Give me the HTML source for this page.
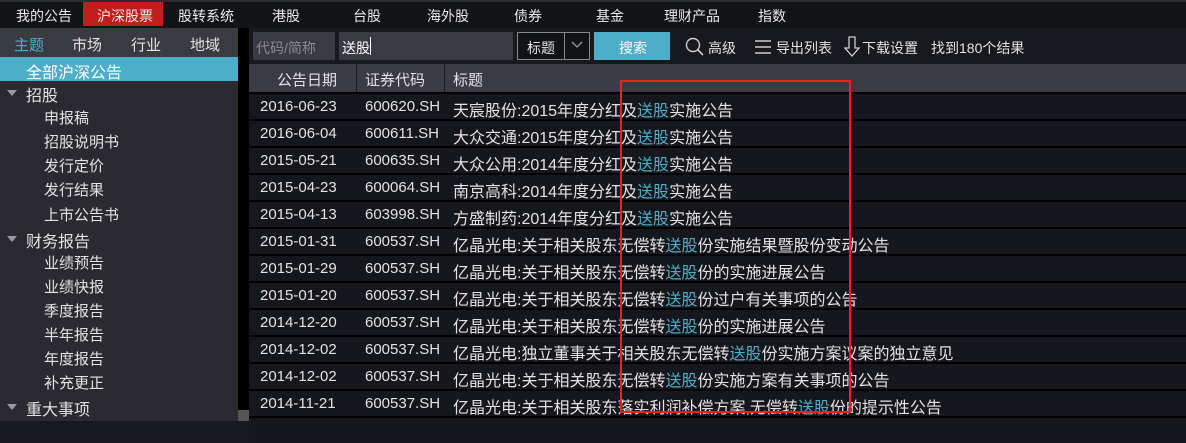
<!DOCTYPE html>
<html><head><meta charset="utf-8"><style>
*{margin:0;padding:0;box-sizing:border-box}
body{width:1186px;height:421px;overflow:hidden;background:#18191e;font-family:"Liberation Sans","Noto Sans CJK SC",sans-serif;font-size:14px;color:#e2e2e2;position:relative}
.a{position:absolute;white-space:nowrap}
.nav{left:0;top:0;width:1186px;height:28px;background:#111317;border-top:2px solid #2a2b30}
.nav span{position:absolute;top:4px;font-size:14px;color:#e8e8e8}
.side{left:0;top:28px;width:238px;height:393px;background:#2b2a31}
.tabs{left:0;top:28px;width:238px;height:29px;background:#3a3a41}
.gap{left:238px;top:28px;width:11px;height:393px;background:#000}
.inp{background:#3a3b42;height:28px;top:32px}
.hd{left:249px;top:64px;width:937px;height:28px;background:#3a3b44}
.row{left:249px;width:937px;height:25px;background:#15171c;font-size:16px}
.row span{position:absolute;top:3px}
.row span.d{font-size:15px;top:4px}
.b{color:#4eadc8}
.si{font-size:15px}
</style></head><body>
<div class="a nav">
<span style="left:16px">我的公告</span>
<div class="a" style="left:83px;top:0;width:80px;height:24px;background:#c01d1d"></div>
<span style="left:97px">沪深股票</span>
<span style="left:178px">股转系统</span>
<span style="left:272px">港股</span>
<span style="left:353px">台股</span>
<span style="left:427px">海外股</span>
<span style="left:514px">债券</span>
<span style="left:596px">基金</span>
<span style="left:664px">理财产品</span>
<span style="left:758px">指数</span>
</div>
<div class="a side"></div>
<div class="a tabs"></div>
<div class="a si" style="left:14px;top:34px;color:#4eadc8">主题</div>
<div class="a si" style="left:72px;top:34px">市场</div>
<div class="a si" style="left:131px;top:34px">行业</div>
<div class="a si" style="left:190px;top:34px">地域</div>
<div class="a" style="left:0;top:57px;width:238px;height:24px;background:#4eadc8"></div>
<div class="a" style="left:26px;top:59px;font-size:16px;color:#fff">全部沪深公告</div>
<div class="a" style="left:7px;top:90px;width:0;height:0;border-left:5px solid transparent;border-right:5px solid transparent;border-top:6px solid #999"></div>
<div class="a" style="left:26px;top:82px;font-size:16px">招股</div>
<div class="a si" style="left:44px;top:107px">申报稿</div>
<div class="a si" style="left:44px;top:131px">招股说明书</div>
<div class="a si" style="left:44px;top:155px">发行定价</div>
<div class="a si" style="left:44px;top:179px">发行结果</div>
<div class="a si" style="left:44px;top:204px">上市公告书</div>
<div class="a" style="left:7px;top:236px;width:0;height:0;border-left:5px solid transparent;border-right:5px solid transparent;border-top:6px solid #999"></div>
<div class="a" style="left:26px;top:228px;font-size:16px">财务报告</div>
<div class="a si" style="left:44px;top:252px">业绩预告</div>
<div class="a si" style="left:44px;top:276px">业绩快报</div>
<div class="a si" style="left:44px;top:300px">季度报告</div>
<div class="a si" style="left:44px;top:324px">半年报告</div>
<div class="a si" style="left:44px;top:348px">年度报告</div>
<div class="a si" style="left:44px;top:372px">补充更正</div>
<div class="a" style="left:7px;top:404px;width:0;height:0;border-left:5px solid transparent;border-right:5px solid transparent;border-top:6px solid #999"></div>
<div class="a" style="left:26px;top:396px;font-size:16px">重大事项</div>
<div class="a gap"></div>
<div class="a" style="left:238px;top:410px;width:11px;height:11px;background:#555"></div>

<div class="a inp" style="left:253px;width:82px"></div>
<div class="a" style="left:256px;top:38px;color:#8a8a90">代码/简称</div>
<div class="a inp" style="left:339px;width:174px"></div>
<div class="a" style="left:342px;top:38px;color:#fff">送股</div>
<div class="a" style="left:370px;top:37px;width:1px;height:18px;background:#fff"></div>
<div class="a" style="left:517px;top:32px;width:73px;height:28px;border:1px solid #888;background:#111317"></div>
<div class="a" style="left:564px;top:33px;width:1px;height:26px;background:#888"></div>
<div class="a" style="left:527px;top:38px">标题</div>
<svg class="a" style="left:570px;top:40px" width="14" height="10"><path d="M2 2 L7 7 L12 2" stroke="#999" fill="none" stroke-width="1.3"/></svg>
<div class="a" style="left:594px;top:32px;width:76px;height:28px;background:#4eadc8"></div>
<div class="a" style="left:619px;top:38px;color:#fff">搜索</div>
<svg class="a" style="left:685px;top:37px" width="20" height="20"><circle cx="8" cy="8" r="6.5" stroke="#ccc" fill="none" stroke-width="1.4"/><path d="M12.5 12.5 L18 18" stroke="#ccc" stroke-width="1.6"/></svg>
<div class="a" style="left:708px;top:38px">高级</div>
<svg class="a" style="left:754px;top:39px" width="18" height="16"><path d="M1 2H17M1 8H17M1 14H17" stroke="#ccc" stroke-width="1.4"/></svg>
<div class="a" style="left:776px;top:38px">导出列表</div>
<svg class="a" style="left:844px;top:36px" width="16" height="22"><path d="M5 1H11V12H15L8 20L1 12H5Z" stroke="#ccc" fill="none" stroke-width="1.3"/></svg>
<div class="a" style="left:862px;top:38px">下载设置</div>
<div class="a" style="left:931px;top:38px">找到180个结果</div>

<div class="a hd"></div>
<div class="a" style="left:356px;top:64px;width:1px;height:28px;background:#1a1b20"></div>
<div class="a" style="left:444px;top:64px;width:1px;height:28px;background:#1a1b20"></div>
<div class="a" style="left:277px;top:69px;font-size:15px">公告日期</div>
<div class="a" style="left:365px;top:69px;font-size:15px">证券代码</div>
<div class="a" style="left:453px;top:69px;font-size:15px">标题</div>

<div class="a" style="left:249px;top:92px;width:937px;height:329px;background:#000"></div>
<div class="a row" style="top:94px"><span class="d" style="left:11px">2016-06-23</span><span class="d" style="left:116px">600620.SH</span><span style="left:204px">天宸股份:2015年度分红及<span class="b" style="position:static">送股</span>实施公告</span></div>
<div class="a row" style="top:121px"><span class="d" style="left:11px">2016-06-04</span><span class="d" style="left:116px">600611.SH</span><span style="left:204px">大众交通:2015年度分红及<span class="b" style="position:static">送股</span>实施公告</span></div>
<div class="a row" style="top:148px"><span class="d" style="left:11px">2015-05-21</span><span class="d" style="left:116px">600635.SH</span><span style="left:204px">大众公用:2014年度分红及<span class="b" style="position:static">送股</span>实施公告</span></div>
<div class="a row" style="top:175px"><span class="d" style="left:11px">2015-04-23</span><span class="d" style="left:116px">600064.SH</span><span style="left:204px">南京高科:2014年度分红及<span class="b" style="position:static">送股</span>实施公告</span></div>
<div class="a row" style="top:202px"><span class="d" style="left:11px">2015-04-13</span><span class="d" style="left:116px">603998.SH</span><span style="left:204px">方盛制药:2014年度分红及<span class="b" style="position:static">送股</span>实施公告</span></div>
<div class="a row" style="top:229px"><span class="d" style="left:11px">2015-01-31</span><span class="d" style="left:116px">600537.SH</span><span style="left:204px">亿晶光电:关于相关股东无偿转<span class="b" style="position:static">送股</span>份实施结果暨股份变动公告</span></div>
<div class="a row" style="top:256px"><span class="d" style="left:11px">2015-01-29</span><span class="d" style="left:116px">600537.SH</span><span style="left:204px">亿晶光电:关于相关股东无偿转<span class="b" style="position:static">送股</span>份的实施进展公告</span></div>
<div class="a row" style="top:283px"><span class="d" style="left:11px">2015-01-20</span><span class="d" style="left:116px">600537.SH</span><span style="left:204px">亿晶光电:关于相关股东无偿转<span class="b" style="position:static">送股</span>份过户有关事项的公告</span></div>
<div class="a row" style="top:310px"><span class="d" style="left:11px">2014-12-20</span><span class="d" style="left:116px">600537.SH</span><span style="left:204px">亿晶光电:关于相关股东无偿转<span class="b" style="position:static">送股</span>份的实施进展公告</span></div>
<div class="a row" style="top:337px"><span class="d" style="left:11px">2014-12-02</span><span class="d" style="left:116px">600537.SH</span><span style="left:204px">亿晶光电:独立董事关于相关股东无偿转<span class="b" style="position:static">送股</span>份实施方案议案的独立意见</span></div>
<div class="a row" style="top:364px"><span class="d" style="left:11px">2014-12-02</span><span class="d" style="left:116px">600537.SH</span><span style="left:204px">亿晶光电:关于相关股东无偿转<span class="b" style="position:static">送股</span>份实施方案有关事项的公告</span></div>
<div class="a row" style="top:391px"><span class="d" style="left:11px">2014-11-21</span><span class="d" style="left:116px">600537.SH</span><span style="left:204px">亿晶光电:关于相关股东落实利润补偿方案,无偿转<span class="b" style="position:static">送股</span>份的提示性公告</span></div>
<div class="a row" style="top:418px"></div>

<div class="a" style="left:620px;top:80px;width:231px;height:333px;border:2px solid #f02020"></div>
</body></html>
